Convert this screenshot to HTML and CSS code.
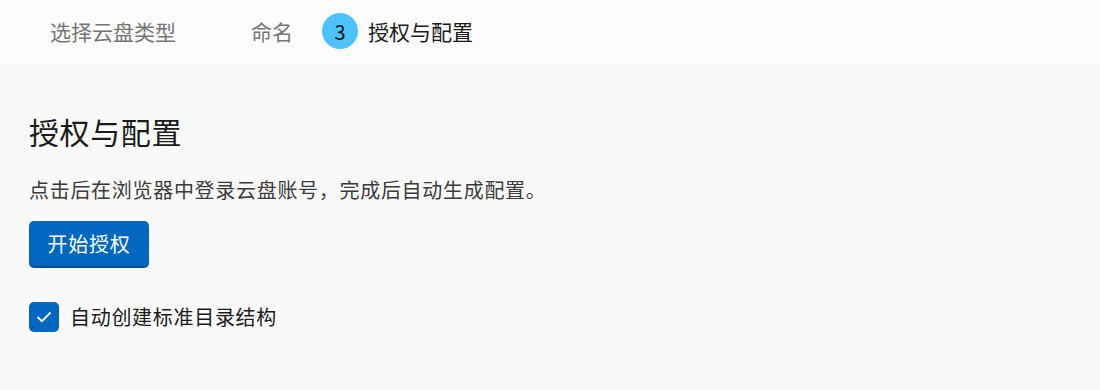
FILE: index.html
```html
<!DOCTYPE html>
<html lang="zh-CN">
<head>
    <meta charset="UTF-8">
    <meta name="viewport" content="width=device-width, initial-scale=1.0">
    <title>授权与配置</title>
    <link rel="stylesheet" href="styles.css">
</head>
<body>
    <div class="steps">
        <div class="step done">
            <span class="step-num">1</span>
            <span class="step-label">选择云盘类型</span>
        </div>
        <div class="step done">
            <span class="step-num">2</span>
            <span class="step-label">命名</span>
        </div>
        <div class="step active">
            <span class="step-num">3</span>
            <span class="step-label">授权与配置</span>
        </div>
    </div>
    <div class="content">
        <h1>授权与配置</h1>
        <p class="description">点击后在浏览器中登录云盘账号，完成后自动生成配置。</p>
        <button class="primary-btn">开始授权</button>
        <label class="check-row">
            <span class="checkbox">
                <svg width="18" height="18" viewBox="0 0 18 18"><path d="M3 9.5 L7 13.2 L15 5" fill="none" stroke="#fff" stroke-width="1.9" stroke-linecap="round" stroke-linejoin="round"/></svg>
            </span>
            <span class="check-label">自动创建标准目录结构</span>
        </label>
    </div>
</body>
</html>
```

FILE: styles.css
```css
body {
    margin: 0;
    font-family: "Noto Sans CJK SC", "Noto Sans", sans-serif;
    background-color: #f9f9f9;
    color: #1b1b1b;
}
.steps {
    display: flex;
    align-items: center;
    gap: 29px;
    height: 62px;
    padding-left: 4px;
    background-color: #fcfcfc;
}
.step {
    display: flex;
    align-items: center;
    gap: 10px;
}
.step-num {
    width: 36px;
    height: 36px;
    border-radius: 50%;
    display: flex;
    align-items: center;
    justify-content: center;
    font-size: 20px;
    color: #fff;
}
.step-label {
    font-size: 21px;
    color: #757575;
    line-height: 28px;
}
.step.active .step-num {
    background-color: #4cc2ff;
    color: #111;
}
.step.active .step-label {
    color: #1b1b1b;
}
.content {
    padding: 49px 29px 0;
}
h1 {
    margin: 0;
    font-size: 30px;
    font-weight: normal;
    line-height: 40px;
    letter-spacing: 0.6px;
}
.description {
    margin: 25px 0 17px;
    font-size: 20px;
    line-height: 28px;
    color: #3b3b3b;
    letter-spacing: 0.7px;
}
.primary-btn {
    display: block;
    width: 120px;
    height: 47px;
    border: none;
    border-bottom: 2px solid #004f94;
    border-radius: 5px;
    background-color: #0067c0;
    color: #fff;
    font-family: inherit;
    font-size: 20px;
    letter-spacing: 0.7px;
    padding: 0;
}
.check-row {
    display: flex;
    align-items: center;
    gap: 11px;
    margin-top: 34px;
}
.checkbox {
    width: 30px;
    height: 30px;
    border-radius: 5px;
    background-color: #0067c0;
    display: flex;
    align-items: center;
    justify-content: center;
}
.check-label {
    font-size: 20px;
    line-height: 28px;
    letter-spacing: 0.7px;
}
```
